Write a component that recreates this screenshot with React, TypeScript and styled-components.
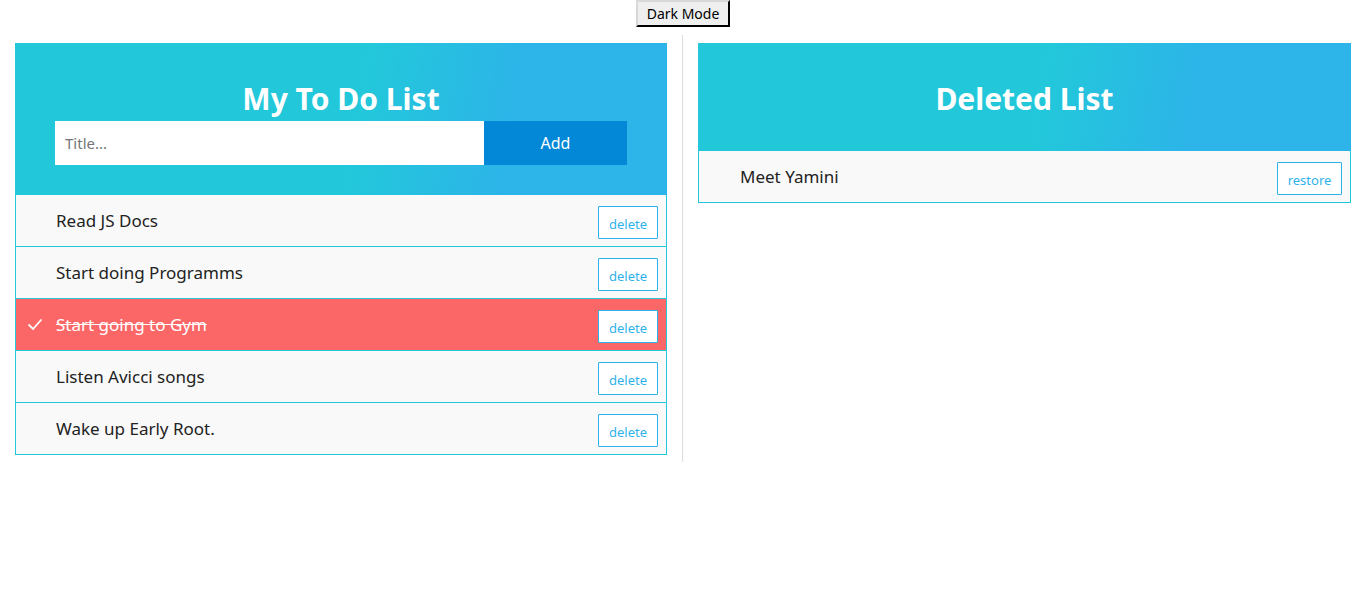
import React, { useState } from "react";
import styled, { createGlobalStyle } from "styled-components";

const Global = createGlobalStyle`
  html, body { margin: 0; padding: 0; background: #fff; }
  body { font-family: "Noto Sans", "Open Sans", sans-serif; }
  * { box-sizing: border-box; }
`;

const Page = styled.div`
  width: 1360px;
`;

const TopBar = styled.div`
  display: flex;
  justify-content: center;
  padding-left: 6px;
`;

const ModeButton = styled.button`
  font-family: "Noto Sans", sans-serif;
  font-size: 14px;
  line-height: 17px;
  color: #000;
  background: #efefef;
  border: 2px outset #767676;
  border-top-color: #d8d8d8;
  border-left-color: #d8d8d8;
  border-right-color: #333;
  border-bottom-color: #333;
  padding: 3px 6px 3px;
  height: 27px;
  width: 94px;
  cursor: pointer;
`;

const Columns = styled.div`
  display: grid;
  grid-template-columns: 652px 1px 653px;
  column-gap: 15px;
  padding-left: 15px;
  margin-top: 8px;
`;

const Divider = styled.div`
  background: #dddddd;
  height: 427px;
`;

const Panel = styled.section`
  padding-top: 8px;
  align-self: start;
`;

const Header = styled.div<{ $tall?: boolean }>`
  background: linear-gradient(100deg, #22c8da 0%, #22c8da 52%, #2db4e9 76%, #2db4e9 100%);
  height: ${(p) => (p.$tall ? 152 : 108)}px;
  display: flex;
  flex-direction: column;
  align-items: center;
  padding-top: 36px;
`;

const Title = styled.h2`
  margin: 0;
  color: #fff;
  font-size: 30px;
  font-weight: 700;
  line-height: 40px;
  height: 42px;
`;

const Form = styled.div`
  display: flex;
  width: 572px;
  height: 44px;
`;

const TitleInput = styled.input`
  flex: 0 0 429px;
  border: none;
  outline: none;
  padding: 0 10px;
  font-family: "Noto Sans", sans-serif;
  font-size: 15px;
  color: #333;
  background: #fff;
  &::placeholder { color: #757575; }
`;

const AddButton = styled.button`
  flex: 1;
  border: none;
  background: #0288d6;
  color: #fff;
  font-family: "Noto Sans", sans-serif;
  font-size: 16px;
  cursor: pointer;
`;

const List = styled.ul`
  list-style: none;
  margin: 0;
  padding: 0;
  border: 1px solid #22c8da;
  border-top: none;
`;

const Row = styled.li<{ $checked?: boolean }>`
  display: flex;
  align-items: center;
  height: 52px;
  background: ${(p) => (p.$checked ? "#fb6767" : "#f9f9f9")};
  color: ${(p) => (p.$checked ? "#fff" : "#222")};
  border-top: 1px solid #22c8da;
  padding-right: 8px;
  &:first-child {
    border-top: none;
    height: 51px;
  }
`;

const CheckSlot = styled.span`
  flex: 0 0 40px;
  display: flex;
  justify-content: center;
  align-items: center;
  padding-right: 2px;
  margin-top: -1px;
`;

const RowText = styled.span<{ $checked?: boolean; $indent?: number }>`
  flex: 1;
  font-size: 17px;
  padding-left: ${(p) => p.$indent ?? 0}px;
  text-decoration: ${(p) => (p.$checked ? "line-through" : "none")};
  margin-top: -1px;
`;

const SmallButton = styled.button<{ $w: number }>`
  width: ${(p) => p.$w}px;
  height: 33px;
  background: #fff;
  border: 1px solid #2eb2ec;
  border-radius: 1px;
  color: #2eb2ec;
  font-family: "Noto Sans", sans-serif;
  font-size: 13px;
  padding: 2px 0 0;
  margin-top: 4px;
  cursor: pointer;
`;

const Check = () => (
  <svg width="16" height="13" viewBox="0 0 16 13" fill="none">
    <path d="M1.5 6.5 L6 11 L14.5 1.5" stroke="#fff" strokeWidth="1.8" />
  </svg>
);

const todos = [
  { text: "Read JS Docs", done: false },
  { text: "Start doing Programms", done: false },
  { text: "Start going to Gym", done: true },
  { text: "Listen Avicci songs", done: false },
  { text: "Wake up Early Root.", done: false },
];

export default function App() {
  const [title, setTitle] = useState("");
  return (
    <Page>
      <Global />
      <TopBar>
        <ModeButton>Dark Mode</ModeButton>
      </TopBar>
      <Columns>
        <Panel>
          <Header $tall>
            <Title>My To Do List</Title>
            <Form>
              <TitleInput
                placeholder="Title..."
                value={title}
                onChange={(e) => setTitle(e.target.value)}
              />
              <AddButton>Add</AddButton>
            </Form>
          </Header>
          <List>
            {todos.map((t) => (
              <Row key={t.text} $checked={t.done}>
                <CheckSlot>{t.done ? <Check /> : null}</CheckSlot>
                <RowText $checked={t.done}>{t.text}</RowText>
                <SmallButton $w={60}>delete</SmallButton>
              </Row>
            ))}
          </List>
        </Panel>
        <Divider />
        <Panel>
          <Header>
            <Title>Deleted List</Title>
          </Header>
          <List>
            <Row>
              <RowText $indent={41}>Meet Yamini</RowText>
              <SmallButton $w={65}>restore</SmallButton>
            </Row>
          </List>
        </Panel>
      </Columns>
    </Page>
  );
}
